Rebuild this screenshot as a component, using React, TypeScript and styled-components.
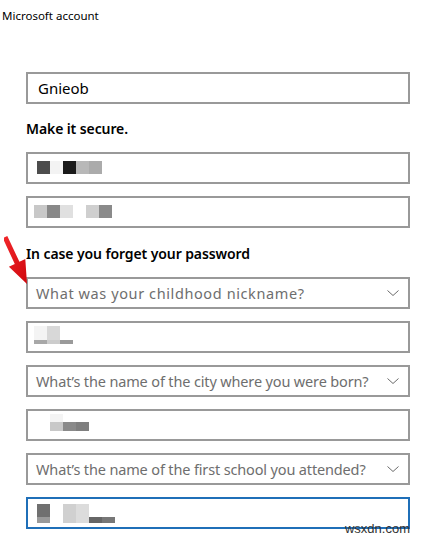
import styled, { createGlobalStyle } from 'styled-components';

const GlobalStyle = createGlobalStyle`
  html, body {
    margin: 0;
    padding: 0;
    background: #fff;
  }
  body {
    font-family: "Noto Sans", "Open Sans", "Liberation Sans", sans-serif;
    color: #000;
  }
`;

const Page = styled.div`
  position: relative;
  width: 422px;
  height: 539px;
  overflow: hidden;
  background: #fff;
`;

const Title = styled.div`
  padding: 7px 0 0 2px;
  height: 72px;
  box-sizing: border-box;
  font-size: 11.5px;
  line-height: 18px;
`;

const Form = styled.div`
  display: flex;
  flex-direction: column;
  gap: 12px;
  width: 384px;
  margin-left: 26px;
`;

const Heading = styled.div<{ $top: number }>`
  padding-top: ${(p) => p.$top}px;
  font-size: 14px;
  font-weight: 600;
  line-height: 22px;
  letter-spacing: -0.1px;
`;

const Field = styled.div<{ $focused?: boolean }>`
  display: flex;
  align-items: center;
  height: 32px;
  box-sizing: border-box;
  padding: 0 9px 0 8px;
  border: 2px solid ${(p) => (p.$focused ? '#1f6fb8' : '#999999')};
  background: #fff;
  font-size: 15px;
`;

const Value = styled.span`
  color: #000;
  padding-left: 2px;
`;

const Placeholder = styled.span<{ $tracking?: number }>`
  flex: 1;
  color: #6e6e6e;
  font-size: 14.5px;
  white-space: nowrap;
  letter-spacing: ${(p) => p.$tracking ?? 0}px;
`;

const Chevron = styled.svg`
  flex: none;
`;

const Arrow = styled.svg`
  position: absolute;
  left: 4px;
  top: 230px;
`;

const Watermark = styled.div`
  position: absolute;
  right: 12px;
  bottom: 3px;
  font-family: "Liberation Sans", Arial, sans-serif;
  font-size: 13px;
  color: #333;
`;

type Cell = { x: number; y: number; w: number; h: number; c: string };

const Mosaic = ({ cells, offset = 0 }: { cells: Cell[]; offset?: number }) => (
  <svg width="110" height="22" style={{ marginLeft: offset }}>
    {cells.map((c, i) => (
      <rect key={i} x={c.x} y={c.y} width={c.w} height={c.h} fill={c.c} />
    ))}
  </svg>
);

const Down = () => (
  <Chevron width="12" height="8" viewBox="0 0 12 8">
    <path d="M0.5 1.5 L6 6.5 L11.5 1.5" fill="none" stroke="#6b6b6b" strokeWidth="1" />
  </Chevron>
);

const App = () => {
  return (
    <Page>
      <GlobalStyle />
      <Title>Microsoft account</Title>
      <Form>
        <Field>
          <Value>Gnieob</Value>
        </Field>
        <Heading $top={2}>Make it secure.</Heading>
        <Field>
          <Mosaic
            cells={[
              { x: 0, y: 4, w: 13, h: 13, c: '#4d4d4d' },
              { x: 13, y: 4, w: 13, h: 13, c: '#f3f3f3' },
              { x: 26, y: 4, w: 13, h: 13, c: '#1a1a1a' },
              { x: 39, y: 4, w: 13, h: 13, c: '#b8b8b8' },
              { x: 52, y: 4, w: 13, h: 13, c: '#ababab' },
            ]}
            offset={1}
          />
        </Field>
        <Field>
          <Mosaic
            cells={[
              { x: 0, y: 4, w: 13, h: 13, c: '#c8c8c8' },
              { x: 13, y: 4, w: 13, h: 13, c: '#888888' },
              { x: 26, y: 4, w: 13, h: 13, c: '#e0e0e0' },
              { x: 52, y: 4, w: 13, h: 13, c: '#cfcfcf' },
              { x: 65, y: 4, w: 13, h: 13, c: '#8a8a8a' },
            ]}
            offset={-2}
          />
        </Field>
        <Heading $top={3}>In case you forget your password</Heading>
        <Field>
          <Placeholder $tracking={0.6}>What was your childhood nickname?</Placeholder>
          <Down />
        </Field>
        <Field>
          <Mosaic
            cells={[
              { x: 0, y: 0, w: 13, h: 14, c: '#f4f4f4' },
              { x: 13, y: 0, w: 13, h: 14, c: '#d8d8d8' },
              { x: 0, y: 14, w: 13, h: 4, c: '#a8a8a8' },
              { x: 13, y: 14, w: 13, h: 4, c: '#cccccc' },
              { x: 26, y: 14, w: 13, h: 4, c: '#9a9a9a' },
            ]}
            offset={-2}
          />
        </Field>
        <Field>
          <Placeholder $tracking={-0.15}>What’s the name of the city where you were born?</Placeholder>
          <Down />
        </Field>
        <Field>
          <Mosaic
            cells={[
              { x: 0, y: 0, w: 13, h: 8, c: '#f4f4f4' },
              { x: 0, y: 8, w: 13, h: 9, c: '#c8c8c8' },
              { x: 13, y: 8, w: 13, h: 9, c: '#8a8a8a' },
              { x: 26, y: 8, w: 13, h: 9, c: '#7f7f7f' },
            ]}
            offset={14}
          />
        </Field>
        <Field>
          <Placeholder $tracking={-0.15}>What’s the name of the first school you attended?</Placeholder>
          <Down />
        </Field>
        <Field $focused>
          <Mosaic
            cells={[
              { x: 0, y: 2, w: 13, h: 13, c: '#707070' },
              { x: 0, y: 15, w: 13, h: 6, c: '#9a9a9a' },
              { x: 26, y: 2, w: 13, h: 19, c: '#d0d0d0' },
              { x: 39, y: 2, w: 13, h: 19, c: '#dcdcdc' },
              { x: 52, y: 15, w: 13, h: 6, c: '#666666' },
              { x: 65, y: 15, w: 13, h: 6, c: '#777777' },
            ]}
            offset={1}
          />
        </Field>
      </Form>
      <Arrow width="32" height="58" viewBox="0 0 32 58">
        <defs>
          <linearGradient id="ar" x1="0" y1="0" x2="1" y2="1">
            <stop offset="0" stopColor="#f2282c" />
            <stop offset="1" stopColor="#d0070d" />
          </linearGradient>
        </defs>
        <path
          d="M-1.3 8 L3.3 6 L15.4 31.8 L21.3 29.1 L23 54 L4.9 36.7 L10.8 34 Z"
          fill="url(#ar)"
        />
      </Arrow>
      <Watermark>wsxdn.com</Watermark>
    </Page>
  );
};

export default App;
